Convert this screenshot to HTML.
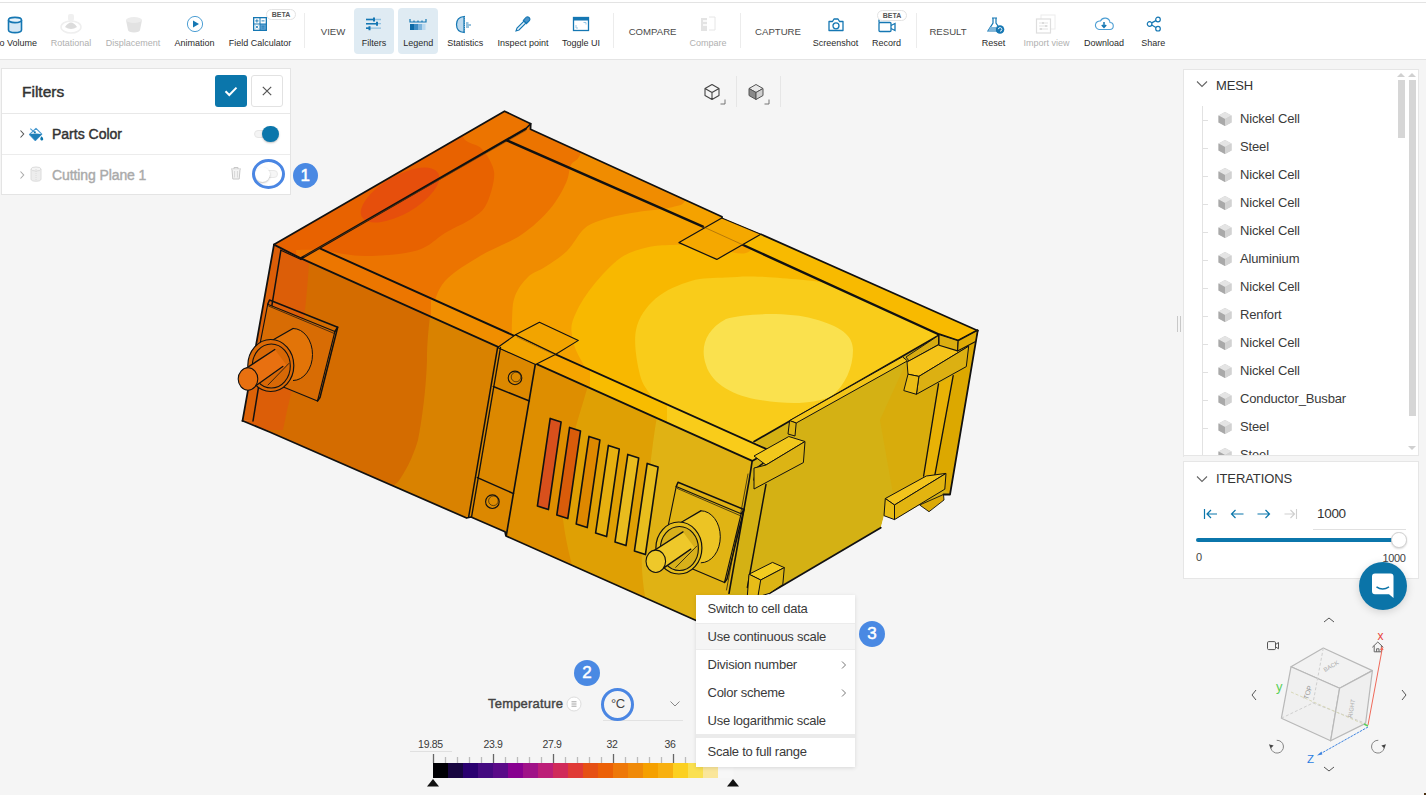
<!DOCTYPE html><html><head><meta charset="utf-8"><style>
*{margin:0;padding:0;box-sizing:border-box}
html,body{width:1426px;height:795px;overflow:hidden;background:#f5f5f5;font-family:"Liberation Sans",sans-serif;color:#333;position:relative}
.a{position:absolute}
.lbl{position:absolute;top:37.8px;font-size:9px;line-height:11px;white-space:nowrap;transform:translateX(-50%);color:#2b2b2b}
.lbl.dis{color:#b0b0b0}
.sec{position:absolute;top:26px;font-size:9.6px;line-height:12px;white-space:nowrap;color:#4a4a4a;transform:translateX(-50%)}
.sep{position:absolute;top:13px;width:1px;height:35px;background:#ececec}
.beta{position:absolute;height:11px;border:1px solid #e3e3e3;border-radius:6px;background:#fff;font-size:7px;line-height:9px;font-weight:bold;color:#555;text-align:center}
.panel{position:absolute;background:#fff;border:1px solid #e8e8e8}
.mi{position:absolute;left:1240px;font-size:13px;line-height:16px;color:#3a3a3a;white-space:nowrap;letter-spacing:-0.15px}
.menu-item{position:absolute;left:12px;font-size:13px;line-height:16px;color:#3a3a3a;white-space:nowrap;letter-spacing:-0.25px}
.badge{position:absolute;border-radius:50%;background:#4a89e3;color:#fff;font-size:17px;text-align:center;-webkit-text-stroke:0.5px #fff}
.tick{position:absolute;font-size:10.5px;line-height:12px;color:#3a3a3a;white-space:nowrap;transform:translateX(-50%);letter-spacing:-0.3px}
</style></head><body>
<svg class="a" style="left:0;top:0" width="1426" height="795" viewBox="0 0 1426 795"><defs><clipPath id="cTop"><path d="M274.0,244.6 L504.5,111.2 L530.7,123.7 L530.5,129.2 L722.0,216.7 L722.0,218.0 L761.0,234.3 L977.4,330.5 L958.2,340.8 L939.0,334.5 L754.1,441.5 L770.3,450.8 L752.2,460.9 L301.0,258.4Z"/></clipPath><clipPath id="cFront"><path d="M274.0,244.6 L301.0,258.4 L752.2,460.9 L749.2,480.0 L729.0,593.3 L727.0,640.0 L694.6,620.0 L506.0,536.0 L505.0,531.7 L471.0,517.0 L466.6,518.0 L269.6,432.0 L242.5,420.8 L253.0,421.0Z"/></clipPath><clipPath id="cEnd"><path d="M752.2,460.9 L770.3,450.8 L754.1,441.5 L938.2,335.9 L958.5,343.0 L977.4,330.5 L950.0,494.5 L943.5,494.5 L929.0,511.7 L919.7,505.0 L894.5,519.6 L884.0,515.7 L880.8,527.7 L769.0,593.0 L729.0,600.0 L729.0,593.3 L749.2,480.0Z"/></clipPath><linearGradient id="gRail" gradientUnits="userSpaceOnUse" x1="300" y1="0" x2="770" y2="0"><stop offset="0" stop-color="#ec7600"/><stop offset="0.278" stop-color="#ec7600"/><stop offset="0.278" stop-color="#f08e00"/><stop offset="0.457" stop-color="#f08e00"/><stop offset="0.457" stop-color="#f5a400"/><stop offset="0.616" stop-color="#f5a400"/><stop offset="0.616" stop-color="#f8bc00"/><stop offset="0.78" stop-color="#f8bc00"/><stop offset="0.78" stop-color="#f9cc1a"/><stop offset="1" stop-color="#f9cc1a"/></linearGradient></defs><g clip-path="url(#cTop)"><path d="M274.0,244.6 L504.5,111.2 L530.7,123.7 L530.5,129.2 L722.0,216.7 L722.0,218.0 L761.0,234.3 L977.4,330.5 L958.2,340.8 L939.0,334.5 L754.1,441.5 L770.3,450.8 L752.2,460.9 L301.0,258.4Z" fill="#e86200"/><ellipse cx="400" cy="195" rx="44" ry="19" transform="rotate(-30 400 195)" fill="#e64f0c"/><path d="M470.0,100.0 C468.8,106.0 461.0,128.0 462.8,136.0 C464.6,144.0 476.1,143.2 481.0,148.0 C485.9,152.8 489.9,159.7 492.0,165.0 C494.1,170.3 494.8,173.3 493.8,180.0 C492.8,186.7 489.5,198.7 486.0,205.0 C482.5,211.3 479.6,213.3 472.8,218.0 C466.0,222.7 454.3,227.6 445.0,233.0 C435.7,238.4 430.3,246.6 417.0,250.4 C403.7,254.2 380.8,256.0 365.0,256.0 C349.2,256.0 333.5,251.4 322.0,250.4 C310.5,249.4 300.3,250.1 296.0,250.0 L300.0,300.0 L1000.0,600.0 L1000.0,100.0Z" fill="#ec7400"/><path d="M590.0,100.0 C588.5,108.7 584.2,141.2 581.0,152.0 C577.8,162.8 573.5,159.8 571.0,165.0 C568.5,170.2 569.5,175.7 566.0,183.0 C562.5,190.3 557.5,200.3 550.0,209.0 C542.5,217.7 532.7,227.2 521.0,235.0 C509.3,242.8 492.7,248.3 480.0,256.0 C467.3,263.7 453.0,272.0 445.0,281.0 C437.0,290.0 434.5,302.0 432.0,310.0 C429.5,318.0 430.3,325.8 430.0,329.0 L1000.0,600.0 L1000.0,100.0Z" fill="#f08c00"/><path d="M700.0,150.0 C697.8,157.8 691.5,187.5 687.0,197.0 C682.5,206.5 681.2,204.5 673.0,207.0 C664.8,209.5 648.8,210.2 638.0,212.0 C627.2,213.8 616.8,215.3 608.0,218.0 C599.2,220.7 591.8,222.5 585.0,228.0 C578.2,233.5 573.7,244.5 567.0,251.0 C560.3,257.5 551.5,262.7 545.0,267.0 C538.5,271.3 533.0,272.2 528.0,277.0 C523.0,281.8 517.7,288.8 515.0,296.0 C512.3,303.2 512.5,309.3 512.0,320.0 C511.5,330.7 512.0,353.3 512.0,360.0 L1000.0,600.0 L1000.0,150.0Z" fill="#f5a200"/><path d="M770.0,200.0 C766.7,208.5 760.2,243.4 750.0,251.0 C739.8,258.6 721.3,246.8 708.5,245.8 C695.7,244.8 683.3,244.7 673.0,245.0 C662.7,245.3 655.6,245.3 646.8,247.5 C638.0,249.7 629.2,251.8 620.4,258.0 C611.6,264.2 601.4,275.4 594.0,284.5 C586.6,293.6 579.7,304.3 576.0,312.7 C572.3,321.1 570.2,325.4 572.0,335.0 C573.8,344.6 574.0,349.2 587.0,370.0 C600.0,390.8 639.5,445.0 650.0,460.0 L1000.0,600.0 L1000.0,200.0Z" fill="#f8b800"/><path d="M960.0,300.0 C946.7,299.7 901.3,300.7 880.0,298.0 C858.7,295.3 851.7,287.3 832.0,283.8 C812.3,280.3 779.4,277.9 761.7,276.8 C744.0,275.8 737.8,276.8 726.0,277.5 C714.2,278.2 702.7,277.5 691.0,281.0 C679.3,284.5 664.8,290.4 655.6,298.6 C646.4,306.8 638.6,317.3 636.0,330.0 C633.4,342.7 637.0,363.3 640.0,375.0 C643.0,386.7 647.3,389.2 654.0,400.0 C660.7,410.8 675.7,433.3 680.0,440.0 L1000.0,600.0 L1000.0,300.0Z" fill="#f9cc1a"/><path d="M726,319 C745,313 790,312 814,319 C840,326 853,335 853,350 C853,368 845,385 832,396 C815,404 790,405 760,400 C735,396 712,385 706,365 C700,348 705,330 726,319Z" fill="#fae14e"/><path d="M301.0,258.4 L320.4,248.7 L770.3,450.8 L752.2,460.9Z" fill="url(#gRail)"/><path d="M761.0,234.3 L977.4,330.5 L958.2,340.8 L939.0,334.5 L743.2,245.0Z" fill="#f8ba00"/></g><path d="M274.0,244.6 L280.9,250.2 L253.0,421.0 L242.5,420.8Z" fill="#dc6208"/><g clip-path="url(#cFront)"><path d="M274.0,244.6 L301.0,258.4 L752.2,460.9 L749.2,480.0 L729.0,593.3 L727.0,640.0 L694.6,620.0 L506.0,536.0 L505.0,531.7 L471.0,517.0 L466.6,518.0 L269.6,432.0 L242.5,420.8 L253.0,421.0Z" fill="#d46c00"/><path d="M200,200 L309,262 C307,300 300,360 292,390 C288,405 285,420 283,430 L200,430Z" fill="#dc5e08"/><path d="M440,270 C430,300 427,340 427,360 C426,390 422,420 418,440 C412,460 405,472 398,482 L300,560 L900,700 L900,270Z" fill="#d98200"/><path d="M497,347 L536,363 L506,540 L468,520Z" fill="#dc8800"/><path d="M536,363 L752.2,460.9 L747,640 L506,536Z" fill="#de8e00"/><path d="M592,372 C578,420 568,450 563,480 C559,510 565,545 582,600 L900,700 L900,372Z" fill="#dfa004"/><path d="M660,400 C652,440 648,486 645,520 C640,550 640,580 650,620 L900,700 L900,400Z" fill="#e0b214"/></g><g clip-path="url(#cEnd)"><path d="M752.2,460.9 L770.3,450.8 L754.1,441.5 L938.2,335.9 L958.5,343.0 L977.4,330.5 L950.0,494.5 L943.5,494.5 L929.0,511.7 L919.7,505.0 L894.5,519.6 L884.0,515.7 L880.8,527.7 L769.0,593.0 L729.0,600.0 L729.0,593.3 L749.2,480.0Z" fill="#d4b114"/></g><path d="M274.0,244.6 L504.5,111.2 L530.7,123.7 L530.5,129.2 L722.0,216.7 L722.0,218.0" fill="none" stroke="#111" stroke-width="1.76" stroke-linejoin="round" stroke-linecap="round"/><path d="M761.0,234.3 L977.4,330.5" fill="none" stroke="#111" stroke-width="1.76" stroke-linejoin="round" stroke-linecap="round"/><path d="M242.5,420.8 L274.0,244.6" fill="none" stroke="#111" stroke-width="1.76" stroke-linejoin="round" stroke-linecap="round"/><path d="M242.5,420.8 L269.6,432.0 L466.6,518.0 L471.0,517.0 L505.0,531.7 L506.0,536.0 L740.0,640.0" fill="none" stroke="#111" stroke-width="1.76" stroke-linejoin="round" stroke-linecap="round"/><path d="M280.9,250.2 L253.0,421.0" fill="none" stroke="#111" stroke-width="1.49" stroke-linejoin="round" stroke-linecap="round"/><path d="M280.9,250.2 L301.0,259.5" fill="none" stroke="#111" stroke-width="1.22" stroke-linejoin="round" stroke-linecap="round"/><path d="M301.0,258.4 L525.5,129.0" fill="none" stroke="#111" stroke-width="2.4" stroke-linejoin="round" stroke-linecap="round"/><path d="M525.5,129.0 L530.7,123.7" fill="none" stroke="#111" stroke-width="1.62" stroke-linejoin="round" stroke-linecap="round"/><path d="M304.0,256.5 L526.0,130.5" fill="none" stroke="#7a4a10" stroke-width="0.5" stroke-linejoin="round" stroke-linecap="round"/><path d="M506.7,140.3 L703.0,226.7" fill="none" stroke="#111" stroke-width="2.4" stroke-linejoin="round" stroke-linecap="round"/><path d="M743.2,245.0 L939.0,334.5 L958.2,340.8 L977.4,330.6" fill="none" stroke="#111" stroke-width="2.4" stroke-linejoin="round" stroke-linecap="round"/><path d="M721.8,218.0 L679.0,242.6 L716.8,259.4 L760.8,234.3Z" fill="#f5a800" stroke="#111" stroke-width="1.2" stroke-linejoin="round"/><path d="M703.0,226.7 L743.2,245.0" fill="none" stroke="#7a4a10" stroke-width="0.5" stroke-linejoin="round" stroke-linecap="round"/><path d="M320.4,248.7 L770.3,450.8" fill="none" stroke="#111" stroke-width="1.9" stroke-linejoin="round" stroke-linecap="round"/><path d="M274.0,244.6 L301.0,258.4 L752.2,460.9 L770.3,450.8" fill="none" stroke="#111" stroke-width="1.76" stroke-linejoin="round" stroke-linecap="round"/><path d="M497.6,347.5 L515.5,334.8 L555.8,354.2 L535.6,364.5Z" fill="#f2a400" stroke="#111" stroke-width="1.1" stroke-linejoin="round"/><path d="M515.5,334.8 L539.4,322.3 L578.4,340.4 L555.8,354.2Z" fill="#f2a400" stroke="#111" stroke-width="1.1" stroke-linejoin="round"/><path d="M517.0,337.0 L553.0,354.0" fill="none" stroke="#7a4a10" stroke-width="0.5" stroke-linejoin="round" stroke-linecap="round"/><path d="M497.6,347.5 L468.7,516.7" fill="none" stroke="#111" stroke-width="1.49" stroke-linejoin="round" stroke-linecap="round"/><path d="M500.5,347.5 L471.6,516.7" fill="none" stroke="#111" stroke-width="1.35" stroke-linejoin="round" stroke-linecap="round"/><path d="M535.2,364.8 L506.3,535.5" fill="none" stroke="#111" stroke-width="1.62" stroke-linejoin="round" stroke-linecap="round"/><path d="M493.3,386.5 L529.4,401.0" fill="none" stroke="#111" stroke-width="1.49" stroke-linejoin="round" stroke-linecap="round"/><path d="M477.4,477.6 L513.5,493.6" fill="none" stroke="#111" stroke-width="1.49" stroke-linejoin="round" stroke-linecap="round"/><circle cx="515" cy="377.9" r="6.8" fill="#de8a00" stroke="#111" stroke-width="1.1"/><circle cx="516" cy="377" r="4.8" fill="none" stroke="#111" stroke-width="0.6"/><circle cx="492.4" cy="501.7" r="6.8" fill="#de8c00" stroke="#111" stroke-width="1.1"/><circle cx="493.4" cy="500.8" r="4.8" fill="none" stroke="#111" stroke-width="0.6"/><path d="M752.2,460.9 L749.2,480.0 L729.0,593.3" fill="none" stroke="#111" stroke-width="1.62" stroke-linejoin="round" stroke-linecap="round"/><path d="M748.0,474.0 L726.5,590.0" fill="none" stroke="#111" stroke-width="0.7" stroke-linejoin="round" stroke-linecap="round"/><path d="M770.3,450.8 L769.8,458.4 L756.2,468.4 L754.0,480.0" fill="none" stroke="#111" stroke-width="1.35" stroke-linejoin="round" stroke-linecap="round"/><path d="M550.2,418.4 L561.1,422.0 L548.4,509.6 L537.4,506.0Z" fill="#d8501c" stroke="#111" stroke-width="1.62" stroke-linejoin="round"/><path d="M569.6,427.4 L580.5,431.0 L567.8,518.6 L556.8,515.0Z" fill="#d95c0a" stroke="#111" stroke-width="1.62" stroke-linejoin="round"/><path d="M589.0,436.4 L599.9,440.0 L587.2,527.6 L576.2,524.0Z" fill="#de8800" stroke="#111" stroke-width="1.62" stroke-linejoin="round"/><path d="M608.4,445.4 L619.3,449.0 L606.6,536.6 L595.6,533.0Z" fill="#e6b010" stroke="#111" stroke-width="1.62" stroke-linejoin="round"/><path d="M627.8,454.4 L638.7,458.0 L626.0,545.6 L615.0,542.0Z" fill="#e9bc1e" stroke="#111" stroke-width="1.62" stroke-linejoin="round"/><path d="M647.2,463.4 L658.1,467.0 L645.4,554.6 L634.4,551.0Z" fill="#e8be1e" stroke="#111" stroke-width="1.62" stroke-linejoin="round"/><path d="M676.2,486.6 L741.1,513.8 L724.5,582.5 L662.0,556.0Z" fill="#e0b414" stroke="#111" stroke-width="1.1" stroke-linejoin="round"/><path d="M676.2,486.6 L678.0,482.3 L743.9,509.5 L741.1,513.8" fill="none" stroke="#111" stroke-width="1.49" stroke-linejoin="round" stroke-linecap="round"/><path d="M743.9,509.5 L727.0,579.0 L724.5,582.5" fill="none" stroke="#111" stroke-width="1.49" stroke-linejoin="round" stroke-linecap="round"/><path d="M677.2,488.4 L740.1,515.6" fill="none" stroke="#111" stroke-width="0.7" stroke-linejoin="round" stroke-linecap="round"/><path d="M678.9,522 L700.8,510.79999999999995 A19.5 26 0 0 1 700.8,562.8 L678.9,574Z" fill="#ecc424"/><path d="M700.8,510.79999999999995 A19.5 26 0 0 1 700.8,562.8" fill="none" stroke="#111" stroke-width="1"/><path d="M680.9,522.5 L700.8,510.8" fill="none" stroke="#111" stroke-width="1.35" stroke-linejoin="round" stroke-linecap="round"/><ellipse cx="678.9" cy="548" rx="23" ry="26" fill="#e4bc1c" stroke="#111" stroke-width="1.2"/><ellipse cx="679.4" cy="548.5" rx="19" ry="22" fill="#d8b01a" stroke="#111" stroke-width="1.1"/><path d="M661.7,569.4 L694.8,548.1 L683.0,531.9 L649.9,553.2Z" fill="#eec82a"/><path d="M649.9,553.2 L683.0,531.9" fill="none" stroke="#111" stroke-width="1.35" stroke-linejoin="round" stroke-linecap="round"/><path d="M661.7,569.4 L690.8,549.1" fill="none" stroke="#111" stroke-width="1.35" stroke-linejoin="round" stroke-linecap="round"/><path d="M675.7,567.4 L696.8,546.1" fill="none" stroke="#111" stroke-width="0.8" stroke-linejoin="round" stroke-linecap="round"/><ellipse cx="655.8" cy="561.3" rx="9.8" ry="11.2" fill="#eec82a" stroke="#111" stroke-width="1.1"/><path d="M267.7,304.3 L334.9,331.5 L317.5,401.0 L254.0,375.0Z" fill="#d86c04" stroke="#111" stroke-width="1.1" stroke-linejoin="round"/><path d="M267.7,304.3 L269.5,300.0 L337.7,327.2 L334.9,331.5" fill="none" stroke="#111" stroke-width="1.49" stroke-linejoin="round" stroke-linecap="round"/><path d="M337.7,327.2 L320.0,397.5 L317.5,401.0" fill="none" stroke="#111" stroke-width="1.49" stroke-linejoin="round" stroke-linecap="round"/><path d="M268.7,306.1 L333.9,333.3" fill="none" stroke="#111" stroke-width="0.7" stroke-linejoin="round" stroke-linecap="round"/><path d="M270.8,339.5 L293,328.5 A19.5 26 0 0 1 293,380.5 L270.8,391.5Z" fill="#e27408"/><path d="M293,328.5 A19.5 26 0 0 1 293,380.5" fill="none" stroke="#111" stroke-width="1"/><path d="M272.8,340.0 L293.0,328.5" fill="none" stroke="#111" stroke-width="1.35" stroke-linejoin="round" stroke-linecap="round"/><ellipse cx="270.8" cy="365.5" rx="23" ry="26" fill="#dc6a06" stroke="#111" stroke-width="1.2"/><ellipse cx="271.3" cy="366.0" rx="19" ry="22" fill="#d86806" stroke="#111" stroke-width="1.1"/><path d="M254.0,387.0 L286.8,365.5 L274.8,349.5 L242.0,371.0Z" fill="#e87010"/><path d="M242.0,371.0 L274.8,349.5" fill="none" stroke="#111" stroke-width="1.35" stroke-linejoin="round" stroke-linecap="round"/><path d="M254.0,387.0 L282.8,366.5" fill="none" stroke="#111" stroke-width="1.35" stroke-linejoin="round" stroke-linecap="round"/><path d="M268.0,385.0 L288.8,363.5" fill="none" stroke="#111" stroke-width="0.8" stroke-linejoin="round" stroke-linecap="round"/><ellipse cx="248" cy="379" rx="9.8" ry="11.2" fill="#e87010" stroke="#111" stroke-width="1.1"/><path d="M905,365 L938.5,383.8 L927,470 L923.6,476 L895,505 L880,420Z" fill="#d8ac0c"/><path d="M938.5,383.8 L953.2,375.6 L934.2,478.6 L923.6,476Z" fill="#e8b206"/><path d="M953.2,375.6 L977.7,330.6 L950,494.5 L934.2,478.6Z" fill="#dca800"/><path d="M938.5,383.8 L923.6,476.0" fill="none" stroke="#111" stroke-width="1.35" stroke-linejoin="round" stroke-linecap="round"/><path d="M953.2,375.6 L934.2,478.6" fill="none" stroke="#111" stroke-width="1.35" stroke-linejoin="round" stroke-linecap="round"/><path d="M977.7,330.6 L950.0,494.5 L943.5,494.5" fill="none" stroke="#111" stroke-width="1.76" stroke-linejoin="round" stroke-linecap="round"/><path d="M754.1,441.5 L938.5,335.5" fill="none" stroke="#111" stroke-width="1.76" stroke-linejoin="round" stroke-linecap="round"/><path d="M789.6,420.6 L902.5,356.8 L907.4,360.9 L796.2,423.0Z" fill="#f2c418" stroke="#111" stroke-width="1.0" stroke-linejoin="round"/><path d="M789.6,420.6 L796.2,423.0 L795.0,436.0 L788.0,434.0Z" fill="#dcb414" stroke="#111" stroke-width="1.0" stroke-linejoin="round"/><path d="M906.0,357.0 L938.5,335.5 L938.5,344.5 L909.0,361.0Z" fill="#d8ac10" stroke="#111" stroke-width="0.9" stroke-linejoin="round"/><path d="M766.0,484.4 L747.4,587.4" fill="none" stroke="#111" stroke-width="1.49" stroke-linejoin="round" stroke-linecap="round"/><path d="M769.5,593.3 L880.8,527.7" fill="none" stroke="#111" stroke-width="1.76" stroke-linejoin="round" stroke-linecap="round"/><path d="M754.0,456.0 L788.8,436.5 L805.0,441.5 L766.0,465.0Z" fill="#f2c81c" stroke="#111" stroke-width="1.0" stroke-linejoin="round"/><path d="M766.0,465.0 L805.0,441.5 L803.4,462.6 L754.0,489.0 L754.0,468.0Z" fill="#dcb414" stroke="#111" stroke-width="1.0" stroke-linejoin="round"/><path d="M749.0,574.2 L772.5,562.4 L784.3,567.6 L760.7,580.0Z" fill="#f2cc20" stroke="#111" stroke-width="1.0" stroke-linejoin="round"/><path d="M760.7,580.0 L784.3,567.6 L782.8,584.5 L769.5,593.3 L748.0,600.0Z" fill="#dcb414" stroke="#111" stroke-width="1.0" stroke-linejoin="round"/><path d="M749.0,574.2 L760.7,580.0 L758.0,596.0 L747.0,600.0Z" fill="#e6bc18" stroke="#111" stroke-width="1.0" stroke-linejoin="round"/><path d="M907.0,362.0 L939.0,344.5 L968.7,346.2 L918.9,376.4 L908.0,374.2Z" fill="#f5c41a" stroke="#111" stroke-width="1.0" stroke-linejoin="round"/><path d="M918.9,376.4 L968.7,346.2 L966.3,366.6 L916.4,394.3Z" fill="#dcb012" stroke="#111" stroke-width="1.0" stroke-linejoin="round"/><path d="M908.0,374.2 L918.9,376.4 L916.4,394.3 L903.8,390.6Z" fill="#eabc14" stroke="#111" stroke-width="1.0" stroke-linejoin="round"/><path d="M939.0,334.5 L958.2,340.8 L957.6,350.9 L939.0,345.2Z" fill="#dcae10" stroke="#111" stroke-width="1.1" stroke-linejoin="round"/><path d="M958.2,340.8 L977.4,330.6 L975.6,341.5 L957.6,350.9Z" fill="#dfac06" stroke="#111" stroke-width="1.1" stroke-linejoin="round"/><path d="M885.3,498.5 L926.3,476.0 L946.0,473.4 L894.5,505.0Z" fill="#f2c41c" stroke="#111" stroke-width="1.0" stroke-linejoin="round"/><path d="M894.5,505.0 L946.0,473.4 L944.8,489.2 L894.5,519.6Z" fill="#e2b410" stroke="#111" stroke-width="1.0" stroke-linejoin="round"/><path d="M885.3,498.5 L894.5,505.0 L894.5,519.6 L884.0,515.7Z" fill="#e8bc14" stroke="#111" stroke-width="1.0" stroke-linejoin="round"/><path d="M919.7,505.0 L943.5,494.5 L944.0,500.0 L929.0,511.7Z" fill="#dcaa08" stroke="#111" stroke-width="0.9" stroke-linejoin="round"/></svg>
<div class="a" style="left:0;top:0;width:1426px;height:2px;background:#fff"></div>
<div class="a" style="left:0;top:2px;width:1426px;height:1px;background:#e3e3e3"></div>
<div class="a" style="left:0;top:3px;width:1426px;height:57px;background:#fff;border-bottom:1px solid #e4e4e4"></div>
<div class="a" style="left:354px;top:8px;width:40px;height:46px;background:#dfebf3;border-radius:4px"></div>
<div class="a" style="left:398px;top:8px;width:40px;height:46px;background:#dfebf3;border-radius:4px"></div>
<div class="lbl" style="left:18.2px">o Volume</div>
<div class="lbl dis" style="left:71px">Rotational</div>
<div class="lbl dis" style="left:133px">Displacement</div>
<div class="lbl" style="left:194.6px">Animation</div>
<div class="lbl" style="left:260px">Field Calculator</div>
<div class="lbl" style="left:374px">Filters</div>
<div class="lbl" style="left:418.3px">Legend</div>
<div class="lbl" style="left:465.3px">Statistics</div>
<div class="lbl" style="left:523px">Inspect point</div>
<div class="lbl" style="left:581px">Toggle UI</div>
<div class="lbl dis" style="left:708px">Compare</div>
<div class="lbl" style="left:835.4px">Screenshot</div>
<div class="lbl" style="left:886.5px">Record</div>
<div class="lbl" style="left:993.4px">Reset</div>
<div class="lbl dis" style="left:1046.6px">Import view</div>
<div class="lbl" style="left:1104px">Download</div>
<div class="lbl" style="left:1153.2px">Share</div>
<div class="sec" style="left:333px">VIEW</div>
<div class="sec" style="left:652.6px">COMPARE</div>
<div class="sec" style="left:778px">CAPTURE</div>
<div class="sec" style="left:948px">RESULT</div>
<div class="sep" style="left:304px"></div>
<div class="sep" style="left:613px"></div>
<div class="sep" style="left:739.5px"></div>
<div class="sep" style="left:915.5px"></div>
<div class="beta" style="left:266px;top:9px;width:30px">BETA</div>
<svg class="a" style="left:7px;top:16px" width="16" height="18" viewBox="0 0 16 18"><path d="M1.5 4 v10 a6.5 2.6 0 0 0 13 0 v-10" fill="#d6e8f5" stroke="#1577b3" stroke-width="1.6"/><ellipse cx="8" cy="4" rx="6.5" ry="2.6" fill="#e9f3fa" stroke="#1577b3" stroke-width="1.6"/></svg>
<svg class="a" style="left:59px;top:12px" width="24" height="23" viewBox="0 0 24 23"><ellipse cx="12" cy="15" rx="10" ry="6" fill="none" stroke="#efefef" stroke-width="1.5"/><path d="M6 15 q6 -9 12 0 q-6 4 -12 0z" fill="#dcdcdc"/><rect x="9" y="2" width="6" height="7" rx="2" fill="#f0f0f0"/></svg>
<svg class="a" style="left:124px;top:16px" width="20" height="18" viewBox="0 0 20 18"><path d="M2 4 L4 14 a6 2.5 0 0 0 12 0 L18 4" fill="#e2e2e2"/><ellipse cx="10" cy="4" rx="8" ry="3" fill="#ececec"/></svg>
<svg class="a" style="left:186px;top:15px" width="18" height="18" viewBox="0 0 18 18"><circle cx="9" cy="9" r="7.6" fill="none" stroke="#4e9fd4" stroke-width="1"/><path d="M7 5.6 L13 9 L7 12.4z" fill="#1577b3"/></svg>
<svg class="a" style="left:252px;top:16px" width="16" height="16" viewBox="0 0 16 16"><rect x="1" y="1" width="14" height="14" fill="#1577b3"/><rect x="2.3" y="2.3" width="5.2" height="5.2" fill="#fff"/><rect x="8.5" y="2.3" width="5.2" height="5.2" fill="#fff"/><rect x="2.3" y="8.5" width="5.2" height="5.2" fill="#fff"/><rect x="8.5" y="8.5" width="5.2" height="5.2" fill="#6aa8d6"/><path d="M3.2 4.9h3.4M4.9 3.2v3.4M9.5 4.9h3M3.5 9.7l2.6 2.6M6.1 9.7l-2.6 2.6M9.5 10.2h3M9.5 12h3" stroke="#1577b3" stroke-width="0.9"/></svg>
<svg class="a" style="left:365px;top:17px" width="18" height="14" viewBox="0 0 18 14"><path d="M1 2.5h15M1 6.7h15M1 11.2h15" stroke="#8fc0e0" stroke-width="1.3"/><path d="M1 2.5h8M1 6.7h11M5 11.2h0" stroke="#1577b3" stroke-width="1.6"/><path d="M9 0.5v4M12 4.7v4M4.5 9.2v4" stroke="#1577b3" stroke-width="2"/><path d="M1 11.2h4" stroke="#1577b3" stroke-width="1.6"/></svg>
<svg class="a" style="left:409px;top:18px" width="18" height="13" viewBox="0 0 18 13"><path d="M1 1v3h16v-3M5 2.5v1.5M9 2.5v1.5M13 2.5v1.5" fill="none" stroke="#1577b3" stroke-width="1.2"/><rect x="1" y="6" width="4" height="6" fill="#0d6aa6"/><rect x="5" y="6" width="4" height="6" fill="#3d8cc4"/><rect x="9" y="6" width="4" height="6" fill="#7ab3dc"/><rect x="13" y="6" width="3.5" height="6" fill="#b9d8ee"/></svg>
<svg class="a" style="left:455px;top:15px" width="20" height="19" viewBox="0 0 20 19"><path d="M9 1.5 C3 2 1.5 5 1.5 9.5 C1.5 14 3 17 9 17.5z" fill="#bcd9ee" stroke="#1577b3" stroke-width="1.2"/><path d="M9.5 1v17" stroke="#1577b3" stroke-width="1" stroke-dasharray="1.2 1"/><path d="M11 8h2.5M11 10h5M11 12h3" stroke="#1577b3" stroke-width="0.9"/></svg>
<svg class="a" style="left:514px;top:15px" width="18" height="18" viewBox="0 0 18 18"><path d="M2 16 L3 13 L10 6 L12 8 L5 15z" fill="#e6f1f8" stroke="#1577b3" stroke-width="1.1"/><path d="M9 5 L13 9 M11 3.5 Q13 1 15 2.5 Q17 4.5 14.5 6.5 L12.5 8.5 L9.5 5.5z" fill="#4a93c9" stroke="#1577b3" stroke-width="1.2"/></svg>
<svg class="a" style="left:572px;top:16px" width="18" height="16" viewBox="0 0 18 16"><rect x="1.5" y="1.5" width="15" height="13" fill="#fff" stroke="#1577b3" stroke-width="1.3"/><rect x="1.5" y="1.5" width="15" height="3" fill="#1577b3"/><path d="M4 9v3h2M14 6.5h-2.5M14 6.5v2" fill="none" stroke="#8fc0e0" stroke-width="0.9"/></svg>
<svg class="a" style="left:699px;top:16px" width="18" height="16" viewBox="0 0 18 16"><path d="M2 2h6v13h-6z" fill="#e3e3e3"/><path d="M10 1h6v13h-6" fill="none" stroke="#e6e6e6" stroke-width="1"/><path d="M4 5h5M4 9h5" stroke="#fff" stroke-width="1.3"/></svg>
<svg class="a" style="left:827px;top:17px" width="18" height="15" viewBox="0 0 18 15"><path d="M2 4.5h3.5l1.5-2.5h4l1.5 2.5h3.5v9h-14z" fill="#fff" stroke="#1577b3" stroke-width="1.3" stroke-linejoin="round"/><circle cx="9" cy="8.8" r="3" fill="none" stroke="#1577b3" stroke-width="1.3"/></svg>
<svg class="a" style="left:877px;top:18px" width="20" height="15" viewBox="0 0 20 15"><rect x="2" y="4.5" width="12" height="9" rx="1" fill="#fff" stroke="#1577b3" stroke-width="1.3"/><path d="M14 7.5l4-2v7l-4-2" fill="none" stroke="#1577b3" stroke-width="1.3"/><path d="M2 1.5v3" stroke="#1577b3" stroke-width="1.3"/></svg>
<div class="beta" style="left:877px;top:9.5px;width:30px">BETA</div>
<svg class="a" style="left:986px;top:17px" width="20" height="18" viewBox="0 0 20 18"><path d="M6 1h5M7 1v5L2 14h11" fill="none" stroke="#1577b3" stroke-width="1.2"/><path d="M10 1v5l2 3" fill="none" stroke="#1577b3" stroke-width="1.2"/><path d="M4.2 10h6.5L9 14H2.3z" fill="#7fb6da"/><circle cx="14" cy="12.5" r="4.3" fill="#1577b3"/><path d="M12.3 12.2a1.8 1.8 0 1 1 1.7 2" fill="none" stroke="#fff" stroke-width="0.9"/></svg>
<svg class="a" style="left:1035px;top:14px" width="22" height="20" viewBox="0 0 22 20"><rect x="6" y="1" width="14" height="14" fill="#fff" stroke="#ececec" stroke-width="1"/><rect x="1.5" y="5" width="14" height="14" fill="#fff" stroke="#dedede" stroke-width="1.2"/><path d="M4 9h9M4 12h9M4 15h9" stroke="#e0e0e0" stroke-width="0.9"/><path d="M8 8v2M11 11v2M6 14v2" stroke="#d5d5d5" stroke-width="1.5"/></svg>
<svg class="a" style="left:1094px;top:16px" width="20" height="15" viewBox="0 0 20 15"><path d="M5 13.5h10.5a3.5 3.5 0 0 0 0.5 -7 a5 5 0 0 0 -9.5 -1.5 a4 4 0 0 0 -1.5 8.5z" fill="#fff" stroke="#4e9fd4" stroke-width="1.1"/><path d="M10 6v5M7.8 9l2.2 2.3 2.2-2.3" fill="none" stroke="#1577b3" stroke-width="1.5"/></svg>
<svg class="a" style="left:1146px;top:16px" width="16" height="16" viewBox="0 0 16 16"><circle cx="12" cy="3.5" r="2.3" fill="#fff" stroke="#1577b3" stroke-width="1.2"/><circle cx="3.6" cy="8" r="2.3" fill="#fff" stroke="#1577b3" stroke-width="1.2"/><circle cx="12" cy="12.7" r="2.3" fill="#fff" stroke="#1577b3" stroke-width="1.2"/><path d="M5.7 6.9L9.9 4.6M5.7 9.1L9.9 11.5" stroke="#1577b3" stroke-width="1.2"/></svg>
<div class="panel" style="left:1px;top:68px;width:290px;height:127px;border-color:#e4e4e4"></div>
<div class="a" style="left:2px;top:113px;width:288px;height:1px;background:#e8e8e8"></div>
<div class="a" style="left:2px;top:154px;width:288px;height:1px;background:#ececec"></div>
<div class="a" style="left:22px;top:83px;font-size:15.5px;line-height:17px;color:#333;-webkit-text-stroke:0.45px #333;letter-spacing:0px">Filters</div>
<div class="a" style="left:215px;top:75px;width:32px;height:32px;background:#0b76ab;border-radius:3px"></div>
<svg class="a" style="left:215px;top:75px" width="32" height="32" viewBox="0 0 32 32"><path d="M10.5 16.2l3.8 3.8 7.2-7.4" fill="none" stroke="#fff" stroke-width="2"/></svg>
<div class="a" style="left:251px;top:75px;width:32px;height:32px;background:#fff;border:1px solid #e2e2e2;border-radius:3px"></div>
<svg class="a" style="left:251px;top:75px" width="32" height="32" viewBox="0 0 32 32"><path d="M11.8 11.8l8.4 8.4M20.2 11.8l-8.4 8.4" stroke="#555" stroke-width="1.2"/></svg>
<svg class="a" style="left:18px;top:129px" width="8" height="10" viewBox="0 0 8 10"><path d="M2.5 1.5l3.2 3.5-3.2 3.5" fill="none" stroke="#555" stroke-width="1.1"/></svg>
<svg class="a" style="left:28px;top:126px" width="17" height="16" viewBox="0 0 17 16"><path d="M1.5 8.5L8 2.3L13.8 8.2L7.3 14.5z" fill="#fff" stroke="#4a9ad0" stroke-width="1.1" stroke-linejoin="round"/><path d="M1.5 8.3Q7 6.8 13.8 8.2L7.3 14.5z" fill="#1f7fb8"/><path d="M2.3 2.6L6.5 6.3" stroke="#4a9ad0" stroke-width="1.1"/><circle cx="6.9" cy="6.3" r="1" fill="#0b76ab"/><path d="M13.5 10.3q-2.1 2.6-0.6 3.9q1.6 0.8 2.3-0.5q0.5-1.4-1.7-3.4z" fill="#0b76ab"/></svg>
<div class="a" style="left:52px;top:126px;font-size:14px;line-height:16px;color:#333;-webkit-text-stroke:0.45px #333;letter-spacing:0px">Parts Color</div>
<div class="a" style="left:254px;top:130px;width:22px;height:8px;border-radius:4px;background:#f4f4f4;border:1px solid #e6e6e6"></div>
<div class="a" style="left:262px;top:125.5px;width:16.5px;height:16.5px;border-radius:50%;background:#0b76ab;box-shadow:0 1px 2px rgba(0,0,0,0.25)"></div>
<svg class="a" style="left:18px;top:170px" width="8" height="10" viewBox="0 0 8 10"><path d="M2.5 1.5l3.2 3.5-3.2 3.5" fill="none" stroke="#aaa" stroke-width="1.1"/></svg>
<svg class="a" style="left:29px;top:166px" width="14" height="17" viewBox="0 0 14 17"><path d="M2 3v10a5 2.2 0 0 0 10 0v-10" fill="#ededed" stroke="#dcdcdc" stroke-width="1"/><ellipse cx="7" cy="3" rx="5" ry="2" fill="#f4f4f4" stroke="#dcdcdc" stroke-width="1"/><path d="M7 3v12" stroke="#d8d8d8" stroke-width="0.8" stroke-dasharray="1 1"/></svg>
<div class="a" style="left:52px;top:167px;font-size:14px;line-height:16px;color:#aaa;-webkit-text-stroke:0.4px #aaa;letter-spacing:-0.1px">Cutting Plane 1</div>
<svg class="a" style="left:230px;top:166px" width="12" height="14" viewBox="0 0 12 14"><path d="M1 3h10M4 3V1.5h4V3" fill="none" stroke="#c8c8c8" stroke-width="1"/><path d="M2 3.5l0.8 9.5h6.4l0.8-9.5" fill="#f4f4f4" stroke="#c8c8c8" stroke-width="1"/><path d="M4.6 5v6.5M7.4 5v6.5" stroke="#cfcfcf" stroke-width="0.8"/></svg>
<div class="a" style="left:258px;top:170px;width:20px;height:8px;border-radius:4px;background:#f6f6f6;border:1px solid #e8e8e8"></div>
<div class="a" style="left:254.5px;top:166.5px;width:15px;height:15px;border-radius:50%;background:#fff;box-shadow:0 1px 2px rgba(0,0,0,0.25)"></div>
<div class="a" style="left:251.5px;top:158.5px;width:33px;height:30px;border-radius:50%;border:3px solid #4a86e3"></div>
<div class="badge" style="left:292.5px;top:162.5px;width:25.5px;height:25.5px;line-height:26px">1</div>
<svg class="a" style="left:703px;top:83px" width="18" height="18" viewBox="0 0 18 18"><path d="M9 1.5L16 5.5V12.5L9 16.5L2 12.5V5.5z M2 5.5L9 9.5L16 5.5 M9 9.5V16.5" fill="none" stroke="#444" stroke-width="1.1" stroke-linejoin="round"/></svg>
<svg class="a" style="left:720px;top:99px" width="6" height="6" viewBox="0 0 6 6"><path d="M5 0.5v4.5h-4.5" fill="none" stroke="#666" stroke-width="0.9"/></svg>
<div class="a" style="left:736px;top:76px;width:1px;height:31px;background:#e6e6e6"></div>
<svg class="a" style="left:747px;top:83px" width="18" height="18" viewBox="0 0 18 18"><path d="M9 1.5L16 5.5L9 9.5L2 5.5z" fill="#e8e8e8" stroke="#555" stroke-width="1"/><path d="M2 5.5L9 9.5V16.5L2 12.5z" fill="#8a8a8a" stroke="#555" stroke-width="1"/><path d="M16 5.5L9 9.5V16.5L16 12.5z" fill="#cfcfcf" stroke="#555" stroke-width="1"/></svg>
<svg class="a" style="left:764px;top:99px" width="6" height="6" viewBox="0 0 6 6"><path d="M5 0.5v4.5h-4.5" fill="none" stroke="#666" stroke-width="0.9"/></svg>
<div class="a" style="left:780px;top:76px;width:1px;height:31px;background:#e6e6e6"></div>
<div class="panel" style="left:1183px;top:69px;width:236px;height:388px;border-color:#e6e6e6"></div>
<svg class="a" style="left:1195px;top:79px" width="14" height="10" viewBox="0 0 14 10"><path d="M2 2.5l5 5 5-5" fill="none" stroke="#666" stroke-width="1.1"/></svg>
<div class="a" style="left:1216px;top:78px;font-size:13px;line-height:16px;color:#333;letter-spacing:-0.1px">MESH</div>
<div class="a" style="left:1202px;top:106px;width:1px;height:350px;background:#e2e2e2"></div>
<div class="a" style="left:1203px;top:119.5px;width:5px;height:1px;background:#e0e0e0"></div>
<svg class="a" style="left:1217px;top:111.0px" width="16" height="16" viewBox="0 0 16 16"><path d="M8 1L14.5 4.5V11.5L8 15L1.5 11.5V4.5z" fill="#c9c9c9"/><path d="M8 1L14.5 4.5L8 8L1.5 4.5z" fill="#e4e4e4"/><path d="M1.5 4.5L8 8V15L1.5 11.5z" fill="#a9a9a9"/><path d="M14.5 4.5L8 8V15L14.5 11.5z" fill="#d2d2d2"/></svg>
<div class="mi" style="top:111.0px">Nickel Cell</div>
<div class="a" style="left:1203px;top:147.5px;width:5px;height:1px;background:#e0e0e0"></div>
<svg class="a" style="left:1217px;top:139.0px" width="16" height="16" viewBox="0 0 16 16"><path d="M8 1L14.5 4.5V11.5L8 15L1.5 11.5V4.5z" fill="#c9c9c9"/><path d="M8 1L14.5 4.5L8 8L1.5 4.5z" fill="#e4e4e4"/><path d="M1.5 4.5L8 8V15L1.5 11.5z" fill="#a9a9a9"/><path d="M14.5 4.5L8 8V15L14.5 11.5z" fill="#d2d2d2"/></svg>
<div class="mi" style="top:139.0px">Steel</div>
<div class="a" style="left:1203px;top:175.5px;width:5px;height:1px;background:#e0e0e0"></div>
<svg class="a" style="left:1217px;top:167.0px" width="16" height="16" viewBox="0 0 16 16"><path d="M8 1L14.5 4.5V11.5L8 15L1.5 11.5V4.5z" fill="#c9c9c9"/><path d="M8 1L14.5 4.5L8 8L1.5 4.5z" fill="#e4e4e4"/><path d="M1.5 4.5L8 8V15L1.5 11.5z" fill="#a9a9a9"/><path d="M14.5 4.5L8 8V15L14.5 11.5z" fill="#d2d2d2"/></svg>
<div class="mi" style="top:167.0px">Nickel Cell</div>
<div class="a" style="left:1203px;top:203.5px;width:5px;height:1px;background:#e0e0e0"></div>
<svg class="a" style="left:1217px;top:195.0px" width="16" height="16" viewBox="0 0 16 16"><path d="M8 1L14.5 4.5V11.5L8 15L1.5 11.5V4.5z" fill="#c9c9c9"/><path d="M8 1L14.5 4.5L8 8L1.5 4.5z" fill="#e4e4e4"/><path d="M1.5 4.5L8 8V15L1.5 11.5z" fill="#a9a9a9"/><path d="M14.5 4.5L8 8V15L14.5 11.5z" fill="#d2d2d2"/></svg>
<div class="mi" style="top:195.0px">Nickel Cell</div>
<div class="a" style="left:1203px;top:231.5px;width:5px;height:1px;background:#e0e0e0"></div>
<svg class="a" style="left:1217px;top:223.0px" width="16" height="16" viewBox="0 0 16 16"><path d="M8 1L14.5 4.5V11.5L8 15L1.5 11.5V4.5z" fill="#c9c9c9"/><path d="M8 1L14.5 4.5L8 8L1.5 4.5z" fill="#e4e4e4"/><path d="M1.5 4.5L8 8V15L1.5 11.5z" fill="#a9a9a9"/><path d="M14.5 4.5L8 8V15L14.5 11.5z" fill="#d2d2d2"/></svg>
<div class="mi" style="top:223.0px">Nickel Cell</div>
<div class="a" style="left:1203px;top:259.5px;width:5px;height:1px;background:#e0e0e0"></div>
<svg class="a" style="left:1217px;top:251.0px" width="16" height="16" viewBox="0 0 16 16"><path d="M8 1L14.5 4.5V11.5L8 15L1.5 11.5V4.5z" fill="#c9c9c9"/><path d="M8 1L14.5 4.5L8 8L1.5 4.5z" fill="#e4e4e4"/><path d="M1.5 4.5L8 8V15L1.5 11.5z" fill="#a9a9a9"/><path d="M14.5 4.5L8 8V15L14.5 11.5z" fill="#d2d2d2"/></svg>
<div class="mi" style="top:251.0px">Aluminium</div>
<div class="a" style="left:1203px;top:287.5px;width:5px;height:1px;background:#e0e0e0"></div>
<svg class="a" style="left:1217px;top:279.0px" width="16" height="16" viewBox="0 0 16 16"><path d="M8 1L14.5 4.5V11.5L8 15L1.5 11.5V4.5z" fill="#c9c9c9"/><path d="M8 1L14.5 4.5L8 8L1.5 4.5z" fill="#e4e4e4"/><path d="M1.5 4.5L8 8V15L1.5 11.5z" fill="#a9a9a9"/><path d="M14.5 4.5L8 8V15L14.5 11.5z" fill="#d2d2d2"/></svg>
<div class="mi" style="top:279.0px">Nickel Cell</div>
<div class="a" style="left:1203px;top:315.5px;width:5px;height:1px;background:#e0e0e0"></div>
<svg class="a" style="left:1217px;top:307.0px" width="16" height="16" viewBox="0 0 16 16"><path d="M8 1L14.5 4.5V11.5L8 15L1.5 11.5V4.5z" fill="#c9c9c9"/><path d="M8 1L14.5 4.5L8 8L1.5 4.5z" fill="#e4e4e4"/><path d="M1.5 4.5L8 8V15L1.5 11.5z" fill="#a9a9a9"/><path d="M14.5 4.5L8 8V15L14.5 11.5z" fill="#d2d2d2"/></svg>
<div class="mi" style="top:307.0px">Renfort</div>
<div class="a" style="left:1203px;top:343.5px;width:5px;height:1px;background:#e0e0e0"></div>
<svg class="a" style="left:1217px;top:335.0px" width="16" height="16" viewBox="0 0 16 16"><path d="M8 1L14.5 4.5V11.5L8 15L1.5 11.5V4.5z" fill="#c9c9c9"/><path d="M8 1L14.5 4.5L8 8L1.5 4.5z" fill="#e4e4e4"/><path d="M1.5 4.5L8 8V15L1.5 11.5z" fill="#a9a9a9"/><path d="M14.5 4.5L8 8V15L14.5 11.5z" fill="#d2d2d2"/></svg>
<div class="mi" style="top:335.0px">Nickel Cell</div>
<div class="a" style="left:1203px;top:371.5px;width:5px;height:1px;background:#e0e0e0"></div>
<svg class="a" style="left:1217px;top:363.0px" width="16" height="16" viewBox="0 0 16 16"><path d="M8 1L14.5 4.5V11.5L8 15L1.5 11.5V4.5z" fill="#c9c9c9"/><path d="M8 1L14.5 4.5L8 8L1.5 4.5z" fill="#e4e4e4"/><path d="M1.5 4.5L8 8V15L1.5 11.5z" fill="#a9a9a9"/><path d="M14.5 4.5L8 8V15L14.5 11.5z" fill="#d2d2d2"/></svg>
<div class="mi" style="top:363.0px">Nickel Cell</div>
<div class="a" style="left:1203px;top:399.5px;width:5px;height:1px;background:#e0e0e0"></div>
<svg class="a" style="left:1217px;top:391.0px" width="16" height="16" viewBox="0 0 16 16"><path d="M8 1L14.5 4.5V11.5L8 15L1.5 11.5V4.5z" fill="#c9c9c9"/><path d="M8 1L14.5 4.5L8 8L1.5 4.5z" fill="#e4e4e4"/><path d="M1.5 4.5L8 8V15L1.5 11.5z" fill="#a9a9a9"/><path d="M14.5 4.5L8 8V15L14.5 11.5z" fill="#d2d2d2"/></svg>
<div class="mi" style="top:391.0px">Conductor_Busbar</div>
<div class="a" style="left:1203px;top:427.5px;width:5px;height:1px;background:#e0e0e0"></div>
<svg class="a" style="left:1217px;top:419.0px" width="16" height="16" viewBox="0 0 16 16"><path d="M8 1L14.5 4.5V11.5L8 15L1.5 11.5V4.5z" fill="#c9c9c9"/><path d="M8 1L14.5 4.5L8 8L1.5 4.5z" fill="#e4e4e4"/><path d="M1.5 4.5L8 8V15L1.5 11.5z" fill="#a9a9a9"/><path d="M14.5 4.5L8 8V15L14.5 11.5z" fill="#d2d2d2"/></svg>
<div class="mi" style="top:419.0px">Steel</div>
<div class="a" style="left:1203px;top:455.5px;width:5px;height:1px;background:#e0e0e0"></div>
<svg class="a" style="left:1217px;top:447.0px" width="16" height="16" viewBox="0 0 16 16"><path d="M8 1L14.5 4.5V11.5L8 15L1.5 11.5V4.5z" fill="#c9c9c9"/><path d="M8 1L14.5 4.5L8 8L1.5 4.5z" fill="#e4e4e4"/><path d="M1.5 4.5L8 8V15L1.5 11.5z" fill="#a9a9a9"/><path d="M14.5 4.5L8 8V15L14.5 11.5z" fill="#d2d2d2"/></svg>
<div class="mi" style="top:447.0px">Steel</div>
<div class="a" style="left:1184px;top:456px;width:234px;height:5px;background:#f5f5f5"></div>
<div class="a" style="left:1184px;top:455px;width:234px;height:1px;background:#e6e6e6"></div>
<div class="a" style="left:1184px;top:456px;width:236px;height:5px;background:#f5f5f5"></div>
<svg class="a" style="left:1396px;top:72px" width="10" height="6" viewBox="0 0 10 6"><path d="M1 5l4-4 4 4z" fill="#d0d0d0"/></svg>
<svg class="a" style="left:1407px;top:72px" width="10" height="6" viewBox="0 0 10 6"><path d="M1 5l4-4 4 4z" fill="#d0d0d0"/></svg>
<div class="a" style="left:1398px;top:80px;width:7px;height:58px;background:#d6d6d6"></div>
<div class="a" style="left:1409px;top:80px;width:7px;height:336px;background:#d6d6d6"></div>
<svg class="a" style="left:1407px;top:445px" width="10" height="6" viewBox="0 0 10 6"><path d="M1 1l4 4 4-4z" fill="#d0d0d0"/></svg>
<div class="a" style="left:1177px;top:316px;width:1px;height:16px;background:#c8c8c8"></div>
<div class="a" style="left:1180px;top:316px;width:1px;height:16px;background:#c8c8c8"></div>
<div class="panel" style="left:1183px;top:461px;width:236px;height:118px;border-color:#e6e6e6"></div>
<svg class="a" style="left:1195px;top:474px" width="14" height="10" viewBox="0 0 14 10"><path d="M2 2.5l5 5 5-5" fill="none" stroke="#666" stroke-width="1.1"/></svg>
<div class="a" style="left:1216px;top:471px;font-size:13px;line-height:16px;color:#333;letter-spacing:-0.1px">ITERATIONS</div>
<svg class="a" style="left:1202px;top:507px" width="16" height="14" viewBox="0 0 16 14"><path d="M2.5 2v10M5 7h10M9 3l-4 4 4 4" fill="none" stroke="#0b76ab" stroke-width="1.2"/></svg>
<svg class="a" style="left:1229px;top:507px" width="16" height="14" viewBox="0 0 16 14"><path d="M2.5 7h12M6.5 3l-4 4 4 4" fill="none" stroke="#0b76ab" stroke-width="1.2"/></svg>
<svg class="a" style="left:1256px;top:507px" width="16" height="14" viewBox="0 0 16 14"><path d="M1.5 7h12M9.5 3l4 4-4 4" fill="none" stroke="#0b76ab" stroke-width="1.2"/></svg>
<svg class="a" style="left:1283px;top:507px" width="16" height="14" viewBox="0 0 16 14"><path d="M1.5 7h10M7.5 3l4 4-4 4M13.5 2v10" fill="none" stroke="#cfcfcf" stroke-width="1.1"/></svg>
<div class="a" style="left:1317px;top:506px;font-size:13.5px;line-height:16px;color:#333;letter-spacing:-0.3px">1000</div>
<div class="a" style="left:1313px;top:529px;width:93px;height:1px;background:#e0e0e0"></div>
<div class="a" style="left:1196px;top:537.5px;width:203px;height:4.5px;border-radius:2px;background:#0b76ab"></div>
<div class="a" style="left:1391px;top:532px;width:15.5px;height:15.5px;border-radius:50%;background:#fff;border:1px solid #cfcfcf;box-shadow:0 1px 2px rgba(0,0,0,0.15)"></div>
<div class="a" style="left:1196px;top:551px;font-size:11px;line-height:13px;color:#444">0</div>
<div class="a" style="left:1382.5px;top:552px;font-size:11px;line-height:13px;color:#444;letter-spacing:-0.4px">1000</div>
<div class="a" style="left:1359px;top:562px;width:48px;height:48px;border-radius:50%;background:#0b74a8;box-shadow:0 2px 8px rgba(0,0,0,0.15)"></div>
<svg class="a" style="left:1370px;top:572px" width="26" height="28" viewBox="0 0 26 28"><path d="M2 4.5q0-3 3-3h15.5q3 0 3 3v21.5l-4.5-3.8h-14q-3 0-3-3z" fill="#fff"/><path d="M6.5 14.8q6 4.2 12.5 0" fill="none" stroke="#0b74a8" stroke-width="1.5"/></svg>
<svg class="a" style="left:0;top:0" width="1426" height="795"><path d="M1324 622l5-4 5 4M1324 767l5 4 5-4" fill="none" stroke="#555" stroke-width="1"/><path d="M1256 690l-4 5 4 5M1402 690l4 5-4 5" fill="none" stroke="#555" stroke-width="1"/><rect x="1267.5" y="641.6" width="8" height="8" rx="1.2" fill="none" stroke="#555" stroke-width="1"/><path d="M1275.5 644.5l3-2v6.3l-3-2" fill="none" stroke="#555" stroke-width="1"/><path d="M1372.3 647.3l5.5-5.3 5.5 5.3M1374.2 645.6v6.2h7.2v-6.2M1376.6 651.8v-3h2.4v3" fill="none" stroke="#666" stroke-width="1"/><path d="M1276.7,740.3 A6.4,6.4 0 1 1 1270.8,748" fill="none" stroke="#777" stroke-width="0.9"/><path d="M1269,744.3L1273.6,745.6L1270.6,748.6z" fill="#444"/><path d="M1378.3,740.3 A6.4,6.4 0 1 0 1384.2,748" fill="none" stroke="#777" stroke-width="0.9"/><path d="M1386,744.3L1381.4,745.6L1384.4,748.6z" fill="#444"/><path d="M1291 666.8L1323.3 648L1372.4 670.6L1339.6 688.3z" fill="#f2f2f2" stroke="#b8b8b8" stroke-width="1.2" stroke-linejoin="round"/><path d="M1291 666.8L1339.6 688.3L1330.6 740.8L1281.4 718.2z" fill="#f0f0f0" stroke="#b8b8b8" stroke-width="1.2" stroke-linejoin="round"/><path d="M1339.6 688.3L1372.4 670.6L1365.6 723.4L1330.6 740.8z" fill="#efefef" stroke="#b8b8b8" stroke-width="1.2" stroke-linejoin="round"/><path d="M1323.3 648L1313 703M1281.4 718.2L1313 703L1365.6 723.4" fill="none" stroke="#cfcfcf" stroke-width="1" stroke-dasharray="3 2"/><path d="M1291 692L1365.6 725" fill="none" stroke="#d8d8b8" stroke-width="1" stroke-dasharray="3 2"/><text x="1308" y="700" font-size="7" fill="#999" transform="rotate(-72 1308 700)" font-family="Liberation Sans">TOP</text><text x="1325" y="672" font-size="6" fill="#aaa" transform="rotate(-30 1325 672)" font-family="Liberation Sans">BACK</text><text x="1352" y="718" font-size="6" fill="#aaa" transform="rotate(-80 1352 718)" font-family="Liberation Sans">RIGHT</text><path d="M1368 725L1382 650" stroke="#f06a5a" stroke-width="1"/><path d="M1380 650l2-4 1.5 4z" fill="#f06a5a"/><path d="M1368 727L1320 754" stroke="#3b82e0" stroke-width="1" stroke-dasharray="2.5 1"/><path d="M1317 755.5l4.5-4 0.8 3z" fill="#3b82e0"/><path d="M1364 724l4 2" stroke="#5ad05a" stroke-width="1.5"/><text x="1377.5" y="640" font-size="12" fill="#e8453c" font-family="Liberation Sans">x</text><text x="1276" y="691" font-size="13" fill="#5ad05a" font-family="Liberation Sans">y</text><text x="1307" y="762.5" font-size="11.5" fill="#2a7de1" font-family="Liberation Sans">Z</text></svg>
<div class="a" style="left:488px;top:696px;font-size:13px;line-height:16px;color:#444;-webkit-text-stroke:0.4px #444;letter-spacing:0.2px">Temperature</div>
<svg class="a" style="left:566px;top:696px" width="16" height="16" viewBox="0 0 16 16"><circle cx="8" cy="8" r="7" fill="#fff" stroke="#ddd" stroke-width="1"/><path d="M5.5 5.8h5M5.5 8h5M5.5 10.2h5" stroke="#666" stroke-width="0.6"/></svg>
<div class="a" style="left:611px;top:696px;font-size:13px;line-height:16px;color:#444;letter-spacing:-0.5px">°C</div>
<svg class="a" style="left:668px;top:699px" width="14" height="10" viewBox="0 0 14 10"><path d="M2.5 2.5l4.5 4.5 4.5-4.5" fill="none" stroke="#888" stroke-width="1"/></svg>
<div class="a" style="left:603px;top:720px;width:80px;height:1px;background:#e2e2e2"></div>
<div class="a" style="left:600.5px;top:687.5px;width:33px;height:33px;border-radius:50%;border:3px solid #4a86e3"></div>
<div class="badge" style="left:574px;top:659.5px;width:26px;height:26px;line-height:26px">2</div>
<svg class="a" style="left:0;top:0" width="1426" height="795"><rect x="433" y="763" width="15.2" height="15" fill="#000004"/><rect x="448" y="763" width="15.2" height="15" fill="#180640"/><rect x="463" y="763" width="15.2" height="15" fill="#2a0070"/><rect x="478" y="763" width="15.2" height="15" fill="#440a80"/><rect x="493" y="763" width="15.2" height="15" fill="#5a0a88"/><rect x="508" y="763" width="15.2" height="15" fill="#880090"/><rect x="523" y="763" width="15.2" height="15" fill="#a01288"/><rect x="538" y="763" width="15.2" height="15" fill="#bc1e78"/><rect x="553" y="763" width="15.2" height="15" fill="#d02a5a"/><rect x="568" y="763" width="15.2" height="15" fill="#e03a36"/><rect x="583" y="763" width="15.2" height="15" fill="#e65014"/><rect x="598" y="763" width="15.2" height="15" fill="#ec6006"/><rect x="613" y="763" width="15.2" height="15" fill="#ee7808"/><rect x="628" y="763" width="15.2" height="15" fill="#f08a08"/><rect x="643" y="763" width="15.2" height="15" fill="#f5a000"/><rect x="658" y="763" width="15.2" height="15" fill="#f8b010"/><rect x="673" y="763" width="15.2" height="15" fill="#fcd020"/><rect x="688" y="763" width="15.2" height="15" fill="#fae050"/><rect x="703" y="763" width="15.2" height="15" fill="#fae69a"/><rect x="718" y="763" width="15.2" height="15" fill="#f7f7f7"/><path d="M433.5 754V763" stroke="#666" stroke-width="1.3"/><path d="M445.5 757V763" stroke="#bbb" stroke-width="1.3"/><path d="M457.5 757V763" stroke="#bbb" stroke-width="1.3"/><path d="M469.5 757V763" stroke="#bbb" stroke-width="1.3"/><path d="M481.5 757V763" stroke="#bbb" stroke-width="1.3"/><path d="M493.5 754V763" stroke="#666" stroke-width="1.3"/><path d="M505.5 757V763" stroke="#bbb" stroke-width="1.3"/><path d="M517.5 757V763" stroke="#bbb" stroke-width="1.3"/><path d="M529.5 757V763" stroke="#bbb" stroke-width="1.3"/><path d="M541.5 757V763" stroke="#bbb" stroke-width="1.3"/><path d="M553.5 754V763" stroke="#666" stroke-width="1.3"/><path d="M565.5 757V763" stroke="#bbb" stroke-width="1.3"/><path d="M577.5 757V763" stroke="#bbb" stroke-width="1.3"/><path d="M589.5 757V763" stroke="#bbb" stroke-width="1.3"/><path d="M601.5 757V763" stroke="#bbb" stroke-width="1.3"/><path d="M613.5 754V763" stroke="#666" stroke-width="1.3"/><path d="M625.5 757V763" stroke="#bbb" stroke-width="1.3"/><path d="M637.5 757V763" stroke="#bbb" stroke-width="1.3"/><path d="M649.5 757V763" stroke="#bbb" stroke-width="1.3"/><path d="M661.5 757V763" stroke="#bbb" stroke-width="1.3"/><path d="M673.5 754V763" stroke="#666" stroke-width="1.3"/><path d="M685.5 757V763" stroke="#bbb" stroke-width="1.3"/><path d="M697.5 757V763" stroke="#bbb" stroke-width="1.3"/><path d="M709.5 757V763" stroke="#bbb" stroke-width="1.3"/><path d="M721.5 757V763" stroke="#bbb" stroke-width="1.3"/><path d="M733.5 754V763" stroke="#666" stroke-width="1.3"/><path d="M427 786.5L433 779L439 786.5z" fill="#111"/><path d="M727 786.5L733 779L739 786.5z" fill="#111"/></svg>
<div class="tick" style="left:430.5px;top:737.5px">19.85</div>
<div class="tick" style="left:493px;top:737.5px">23.9</div>
<div class="tick" style="left:552px;top:737.5px">27.9</div>
<div class="tick" style="left:612px;top:737.5px">32</div>
<div class="tick" style="left:670px;top:737.5px">36</div>
<div class="a" style="left:410px;top:751px;width:42px;height:1px;background:#e0e0e0"></div>
<div class="a" style="left:695.5px;top:594.5px;width:159px;height:172px;background:#fff;box-shadow:0 1px 4px rgba(0,0,0,0.12)"><div class="a" style="left:0;top:28.5px;width:159px;height:27px;background:#f5f5f5;border-top:1px solid #ececec;border-bottom:1px solid #ececec"></div><div class="menu-item" style="top:6.2px">Switch to cell data</div><div class="menu-item" style="top:34.2px">Use continuous scale</div><div class="menu-item" style="top:62.2px">Division number</div><div class="menu-item" style="top:90.2px">Color scheme</div><div class="menu-item" style="top:118.2px">Use logarithmic scale</div><div class="a" style="left:0;top:139.5px;width:159px;height:3.5px;background:#ebebeb"></div><div class="menu-item" style="top:149.2px">Scale to full range</div><svg class="a" style="left:144px;top:65px" width="8" height="10"><path d="M2 1.5l3.5 3.5-3.5 3.5" fill="none" stroke="#777" stroke-width="1"/></svg><svg class="a" style="left:144px;top:93px" width="8" height="10"><path d="M2 1.5l3.5 3.5-3.5 3.5" fill="none" stroke="#777" stroke-width="1"/></svg></div>
<div class="badge" style="left:859px;top:620.5px;width:26px;height:26px;line-height:26px">3</div>
<div class="a" style="left:1424px;top:793px;width:2px;height:2px;background:#4a3010"></div>
</body></html>
